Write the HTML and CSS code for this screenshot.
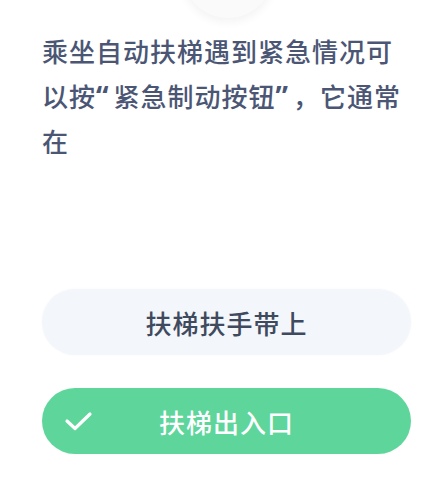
FILE: index.html
```html
<!DOCTYPE html>
<html lang="zh-CN">
<head>
    <meta charset="UTF-8">
    <meta name="viewport" content="width=device-width, initial-scale=1.0">
    <title>答题</title>
    <link rel="stylesheet" href="styles.css">
</head>
<body>
    <div class="page">
        <div class="avatar"></div>
        <p class="question">乘坐自动扶梯遇到紧急情况可以按<span class="quote open">“</span>紧急制动按钮<span class="quote close">”</span>，它通常在</p>
        <div class="options">
            <button class="option">扶梯扶手带上</button>
            <button class="option correct">
                <svg class="check" width="30" height="20" viewBox="0 0 30 20">
                    <path d="M3 10 L11 17.5 L26 3" fill="none" stroke="#fff" stroke-width="3.2" stroke-linecap="round" stroke-linejoin="round"/>
                </svg>
                扶梯出入口
            </button>
        </div>
    </div>
</body>
</html>
```

FILE: styles.css
```css
body {
    margin: 0;
    background-color: #fff;
    font-family: "Noto Sans CJK SC", "Noto Sans", sans-serif;
}

.page {
    width: 442px;
    height: 484px;
    overflow: hidden;
    padding: 0 28px 0 42px;
    box-sizing: border-box;
}

.avatar {
    width: 92px;
    height: 92px;
    margin: -74px auto 10px;
    border-radius: 50%;
    background-color: #fafafb;
    box-shadow: 0 4px 10px rgba(0, 0, 0, 0.05);
}

.question {
    margin: 0;
    font-size: 26px;
    line-height: 45px;
    font-weight: 500;
    color: #4b5675;
    letter-spacing: 1px;
}

/* comillas estrechas, como en la captura */
.quote {
    font-family: "Noto Sans", sans-serif;
    font-weight: 700;
    font-size: 28px;
    line-height: 1;
    letter-spacing: 0;
}

.quote.open {
    margin-right: 5px;
}

.quote.close {
    margin-right: 5px;
}

.options {
    display: flex;
    flex-direction: column;
    gap: 33px;
    margin-top: 126px;
    margin-right: 3px;
}

.option {
    position: relative;
    height: 66px;
    border: none;
    border-radius: 33px;
    background-color: #f3f6fa;
    color: #3f4a5e;
    font-family: inherit;
    font-size: 26px;
    font-weight: 500;
    letter-spacing: 1px;
    box-shadow: 0 0 3px rgba(0, 0, 0, 0.03);
}

.correct {
    background-color: #5dd59b;
    color: #fff;
}

.check {
    position: absolute;
    left: 22px;
    top: 23px;
}
```
